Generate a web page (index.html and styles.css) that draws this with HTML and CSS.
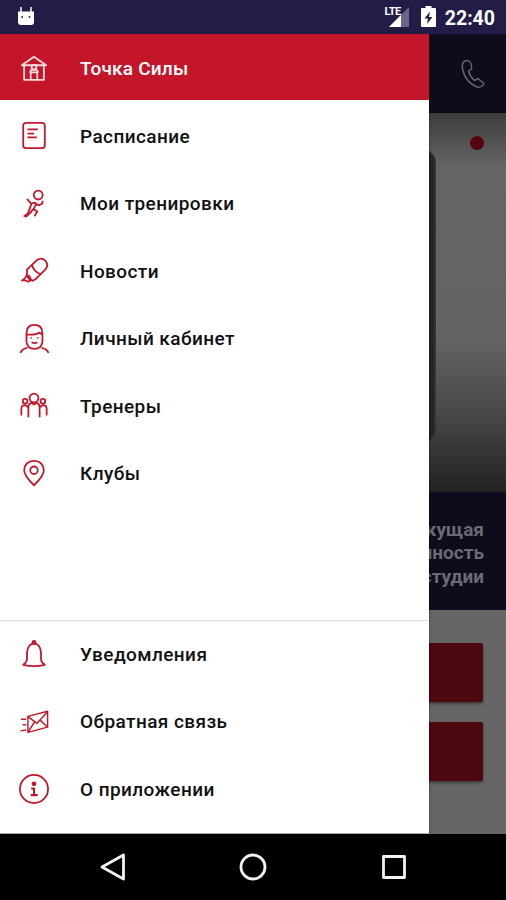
FILE: index.html
```html
<!DOCTYPE html>
<html lang="ru">
<head>
<meta charset="utf-8">
<title>Точка Силы</title>
<link rel="stylesheet" href="styles.css">
</head>
<body>
<div class="phone">
  <header class="status">
    <svg class="robot" width="18" height="20" viewBox="0 0 18 20"><path d="M4 1v5M14 1v5" stroke="#fff" stroke-width="1.5"/><path d="M1 5.5h16V16q0 3-3 3H4q-3 0-3-3z" fill="#fff"/><circle cx="5.2" cy="11" r="1" fill="#333"/><circle cx="12.5" cy="11" r="1" fill="#333"/></svg>
    <div class="status-right">
      <span class="lte">LTE</span>
      <svg class="signal" width="21" height="20" viewBox="0 0 21 20"><path d="M21 0v20H1z" fill="#69668a"/><path d="M13 8v12H1z" fill="#fff"/></svg>
      <svg class="battery" width="15" height="21" viewBox="0 0 15 21"><path d="M4.500 0h6v2H14q1 0 1 1v17q0 1-1 1H1q-1 0-1-1V3q0-1 1-1h3.500z" fill="#fff"/><path d="M9 5.500L3.500 12.500H7L6 18l5.500-7H8z" fill="#221d47"/></svg>
      <span class="clock">22:40</span>
    </div>
  </header>
  <main class="screen">
    <div class="page">
      <div class="appbar">
        <svg width="26" height="32" viewBox="0 0 26 32" fill="none" stroke="#67656f" stroke-width="1.500" stroke-linejoin="round"><path d="M5 3Q1.500 4.500 2.500 11C4.500 20 9.500 26 17 29q4.500 1 7-3.500L18 20.500l-3.500 2Q10 18.500 8.500 13l3-2Q12 5 9 3 7 2 5 3z"/></svg>
      </div>
      <div class="hero"><div class="device"></div><div class="dot"></div></div>
      <div class="banner">Текущая<br>загруженность<br>студии</div>
      <div class="actions"><div class="action"></div><div class="action"></div></div>
    </div>
    <nav class="drawer">
      <div class="item active">
        <svg class="icon" viewBox="0 0 32 32"><path d="M3 12L16 3l13 9H3zM5.500 12v15.500h21V12M12.500 27v-7.500h7V27M11.500 20l1.500-3h6l1.500 3"/><circle cx="16" cy="14" r="2.500"/></svg><span>Точка Силы</span></div>
      <div class="group">
        <div class="item"><svg class="icon" viewBox="0 0 32 32"><rect x="4.500" y="2" width="23" height="27" rx="2.800"/><path d="M9 9h11M9 13.500h7M9 17.500h10"/></svg><span>Расписание</span></div>
        <div class="item"><svg class="icon" viewBox="0 0 32 32"><circle cx="20.500" cy="6.500" r="4.700"/><path d="M8.500 10.500l4.500 5 4-1 4 3 4-2v-3M18.500 16l-3 5.500 4 2.500-3 5M13.500 15.500l-2.500 6.500-1.500 4-4.500 3.500M15 21.500l-3 4-5 4.500"/></svg><span>Мои тренировки</span></div>
        <div class="item"><svg class="icon" viewBox="0 0 32 32"><path d="M8.500 14.500L19 4.500q5-3.500 9 .5t.5 9L18 24.500l-3.500 2q-5-2-6-6zM14 9.500q1 6.500 9 10M8.500 19q-1 5-6 7.500M8.500 20q3.500 1 4 5l-2 2.500-4-1.500H2.500M12.500 25l2 1.500"/></svg><span>Новости</span></div>
        <div class="item"><svg class="icon" viewBox="0 0 32 32"><path d="M8 10q0-9 8.500-9T25 10v9q-1 7.500-8.500 7.500T8 19zM8 11q10 1 14-2 1 2 3 2M9 25.500q-6 1-7.500 5.500M24 25.500q6 1 7.500 5.500M13.500 19.500q3 2 6 0"/><path d="M13 14v1.500M20 14v1.500"/></svg><span>Личный кабинет</span></div>
        <div class="item"><svg class="icon" viewBox="0 0 32 32"><circle cx="16" cy="7.500" r="4.700"/><circle cx="6.500" cy="11" r="2.500"/><circle cx="25.500" cy="11" r="2.500"/><path d="M10 28V17q0-3 3-4.500l3 2 3-2q3 1.500 3 4.500v11M2.500 26v-7q0-4 4-4l3 2M29.500 26v-7q0-4-4-4l-3 2"/></svg><span>Тренеры</span></div>
        <div class="item"><svg class="icon" viewBox="0 0 32 32"><path d="M16 28Q5.500 18 5.500 12 6.500 2 16 2t10.500 10Q26.500 18 16 28z"/><circle cx="16" cy="12" r="4"/></svg><span>Клубы</span></div>
      </div>
      <div class="group bottom">
        <div class="item"><svg class="icon" viewBox="0 0 32 32"><path d="M4.500 27.500q4-3 4-6v-7Q9.500 5 16 5t7.500 9.500v7q0 3 4 6-11.500 3-23 0z"/><circle cx="16" cy="3.500" r="1.600" fill="currentColor"/></svg><span>Уведомления</span></div>
        <div class="item"><svg class="icon thin" viewBox="0 0 32 32"><path d="M9.500 10l21-5.500v17l-21 5.500zM9.500 10l9.500 7.500L30.500 5M9.500 27l7-11M30.500 21.500l-8-7.500M2 13h5.500M4 19h3.500M1.500 25.500l6-1"/></svg><span>Обратная связь</span></div>
        <div class="item"><svg class="icon" viewBox="0 0 32 32"><circle cx="16" cy="16" r="15"/><circle cx="16" cy="10.500" r="1.600" fill="currentColor"/><path d="M13 15.500h3V22M12.500 22.500h7.500" stroke-width="2.200"/></svg><span>О приложении</span></div>
      </div>
    </nav>
  </main>
  <footer class="navbar">
    <svg width="28" height="28" viewBox="0 0 28 28"><path d="M3 14L24.500 2v24z"/></svg>
    <svg width="28" height="28" viewBox="0 0 28 28"><circle cx="14" cy="14" r="12"/></svg>
    <svg width="28" height="28" viewBox="0 0 28 28"><rect x="3.500" y="3.500" width="21" height="21"/></svg>
  </footer>
</div>
</body>
</html>
```
FILE: styles.css
```css
* { box-sizing: border-box; }
body { margin: 0; font-family: Roboto, "Liberation Sans", sans-serif; }
.phone { width: 506px; height: 900px; display: flex; flex-direction: column; overflow: hidden; background: #000; }
.status { height: 34px; background: #221d47; display: flex; justify-content: space-between; padding: 6px 11px 0 17px; color: #fff; flex: none; }
.status-right { display: flex; }
.lte { font-size: 11px; font-weight: 700; line-height: 12px; letter-spacing: -0.5px; margin-right: -13px; z-index: 1; }
.signal { margin: 1px 12px 0 0; overflow: visible; }
.battery { margin-right: 9px; }
.clock { font-size: 19.5px; font-weight: 700; line-height: 25px; }
.screen { position: relative; height: 799.5px; flex: none; }
.page { height: 100%; background: #666; display: flex; flex-direction: column; }
.appbar { height: 79px; background: #0e0b1c; display: flex; justify-content: flex-end; padding: 24px 20px 0 0; }
.hero { height: 379px; display: flex; justify-content: flex-end; background: linear-gradient(#3d3d3d 0, #4d4d4d 22px, #666 55px, #626262 230px, #4a4a4a 295px, #222 379px); }
.device { width: 160px; height: 294px; margin: 36px 70px 0 0; border-radius: 14px; background: #242424; border-right: 2px solid #333; }
.dot { width: 14px; height: 14px; border-radius: 50%; background: #54040e; margin: 23px 22px 0 -36px; }
.banner { height: 118px; background: #0e0b1c; color: #6b6975; text-align: right; font-size: 19px; font-weight: 700; line-height: 23.3px; padding: 26px 22px 0 0; }
.actions { padding: 33px 23px 0 24px; display: flex; flex-direction: column; gap: 20px; }
.action { height: 59px; border-radius: 2px; background: #4e0810; box-shadow: 0 2px 3px rgba(0,0,0,.4); }
.drawer { position: absolute; left: 0; top: 0; width: 428.5px; height: 100%; background: #fff; display: flex; flex-direction: column; box-shadow: 0 0 2px rgba(0,0,0,.6); clip-path: inset(0 -4px 0 0); }
.item { height: 67.5px; display: flex; align-items: center; padding-left: 19px; gap: 31px; font-size: 19px; font-weight: 500; color: #111; letter-spacing: .42px; }
.item.active { height: 66px; padding-top: 3px; background: #c4162a; color: #fff; letter-spacing: .2px; }
.icon { width: 30px; height: 30px; color: #c4162a; fill: none; stroke: currentColor; stroke-width: 1.9; stroke-linejoin: round; overflow: visible; }
.thin { stroke-width: 1.5; }
.active .icon { color: #fbdadd; }
.group { padding-top: 2.4px; flex: 1; }
.bottom { flex: none; height: 213.5px; padding: 0; border-top: 1px solid #ddd; }
.bottom .item { padding-bottom: 1px; }
.navbar { flex: 1; display: flex; align-items: center; justify-content: center; gap: 112.500px; }
.navbar svg { fill: none; stroke: #f2f2f2; stroke-width: 2.800; stroke-linejoin: round; }
```
